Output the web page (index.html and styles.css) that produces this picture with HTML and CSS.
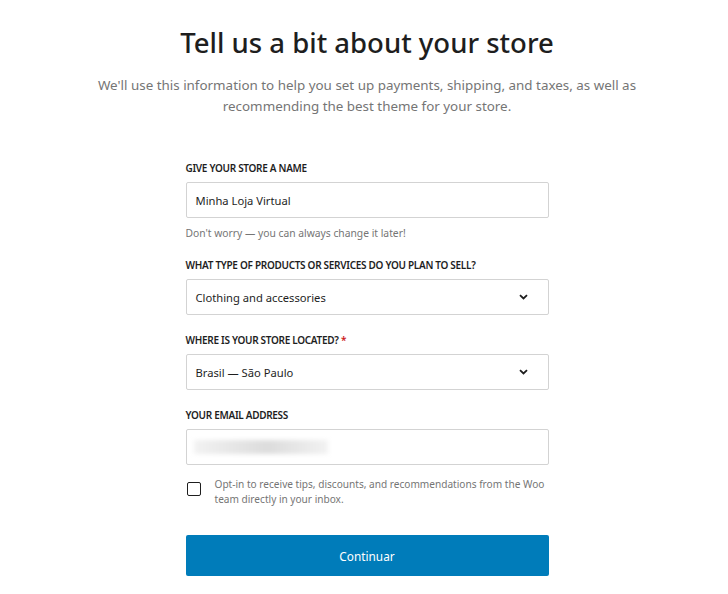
FILE: index.html
```html
<!DOCTYPE html>
<html lang="en">
<head>
<meta charset="utf-8">
<link rel="stylesheet" href="styles.css">
</head>
<body>
<main class="page">
  <header class="intro">
    <h1 class="title">Tell us a bit about your store</h1>
    <p class="lead">We'll use this information to help you set up payments, shipping, and taxes, as well as recommending the best theme for your store.</p>
  </header>
  <form class="form">
    <div class="field">
      <label class="label">GIVE YOUR STORE A NAME</label>
      <div class="control"><span class="value">Minha Loja Virtual</span></div>
      <p class="help">Don't worry — you can always change it later!</p>
    </div>
    <div class="field">
      <label class="label">WHAT TYPE OF PRODUCTS OR SERVICES DO YOU PLAN TO SELL?</label>
      <div class="control select"><span class="value">Clothing and accessories</span>
        <svg class="chev" width="9" height="6" viewBox="0 0 9 6"><path d="M1 1.2 L4.5 4.5 L8 1.2" fill="none" stroke="#1e1e1e" stroke-width="1.8"/></svg>
      </div>
    </div>
    <div class="field">
      <label class="label">WHERE IS YOUR STORE LOCATED? <span class="req">*</span></label>
      <div class="control select"><span class="value">Brasil — São Paulo</span>
        <svg class="chev" width="9" height="6" viewBox="0 0 9 6"><path d="M1 1.2 L4.5 4.5 L8 1.2" fill="none" stroke="#1e1e1e" stroke-width="1.8"/></svg>
      </div>
    </div>
    <div class="field last">
      <label class="label">YOUR EMAIL ADDRESS</label>
      <div class="control"><span class="blur"></span></div>
    </div>
    <div class="optin">
      <span class="box"></span>
      <p class="optin-text">Opt-in to receive tips, discounts, and recommendations from the Woo team directly in your inbox.</p>
    </div>
    <button type="button" class="btn">Continuar</button>
  </form>
</main>
</body>
</html>
```
FILE: styles.css
```css
* { box-sizing: border-box; }
html, body { margin: 0; padding: 0; background: #fff; }
body { font-family: "Noto Sans", "Open Sans", sans-serif; color: #1e1e1e; }
.page { padding: 22px 0 0 6px; display: flex; flex-direction: column; align-items: center; }
.intro { text-align: center; }
.title { margin: 0; font-size: 27.5px; font-weight: 500; line-height: 42px; color: #1e1e1e; }
.lead { margin: 11px 0 0; font-size: 13.4px; line-height: 21px; color: #757575; width: 600px; }
.form { width: 363px; margin-top: 44px; display: flex; flex-direction: column; }
.field { display: flex; flex-direction: column; margin-bottom: 18px; }
.field:first-child { margin-bottom: 17px; }
.field.last { margin-bottom: 12px; }
.label { font-size: 10px; letter-spacing: -0.3px; font-weight: 600; line-height: 14px; color: #1e1e1e; margin-bottom: 7px; }
.req { color: #cc1818; }
.control { height: 36px; border: 1px solid #d3d3d3; border-radius: 2px; display: flex; align-items: center; padding: 0 9px; }
.value { font-size: 11.2px; color: #1e1e1e; }
.select { justify-content: space-between; padding-right: 20px; }
.help { margin: 8px 0 0; font-size: 10.3px; color: #757575; line-height: 15px; }
.blur { width: 134px; height: 14px; background: linear-gradient(90deg, #f2f2f2, #dcdcdc 55%, #f2f2f2); filter: blur(2px); margin-left: -2px; }
.optin { display: flex; align-items: flex-start; gap: 14px; }
.box { flex: none; width: 14px; height: 14px; border: 1px solid #1e1e1e; border-radius: 2px; margin: 5px 0 0 1px; }
.optin-text { margin: 0; font-size: 10.1px; line-height: 15px; color: #757575; }
.btn { margin-top: 28px; height: 41px; border: 0; border-radius: 2px; background: #007cba; color: #fff; font-family: inherit; font-size: 11.8px; }
```
